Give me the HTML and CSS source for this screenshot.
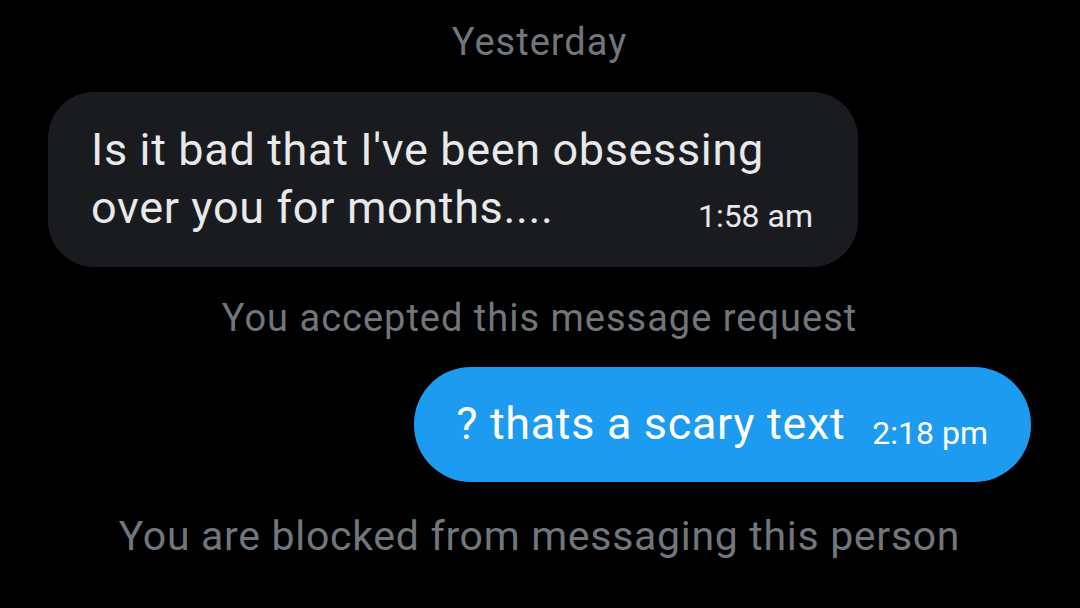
FILE: index.html
```html
<!DOCTYPE html>
<html>
<head>
<meta charset="utf-8">
<link rel="stylesheet" href="styles.css">
</head>
<body>
<main class="chat">
  <div class="sys sys-date">Yesterday</div>
  <div class="bubble bubble-in">
    <span class="msg">Is it bad that I've been obsessing over you for months....</span><span class="time time-float">1:58 am</span>
  </div>
  <div class="sys sys-accept">You accepted this message request</div>
  <div class="bubble bubble-out">
    <span class="msg">? thats a scary text</span><span class="time time-inline">2:18 pm</span>
  </div>
  <div class="sys sys-blocked">You are blocked from messaging this person</div>
</main>
</body>
</html>
```
FILE: styles.css
```css
html, body {
  margin: 0;
  padding: 0;
  background: #000;
}
body {
  width: 1080px;
  height: 608px;
  overflow: hidden;
  font-family: Roboto, "Noto Sans", sans-serif;
}
.chat {
  display: flex;
  flex-direction: column;
  padding: 19px 49px 0 48px;
}
.sys {
  align-self: center;
  color: #71767b;
  font-size: 38px;
  line-height: 46px;
  letter-spacing: 1px;
  white-space: nowrap;
}
.sys-accept { margin-top: 28px; }
.sys-blocked {
  margin-top: 31px;
  font-size: 41px;
  letter-spacing: 0.7px;
}
.bubble {
  font-size: 45px;
  line-height: 58px;
  letter-spacing: 0.65px;
}
.bubble-in {
  align-self: flex-start;
  width: 810px;
  box-sizing: border-box;
  margin-top: 27px;
  padding: 29px 45px 30px 43px;
  background: #1a1b1e;
  color: #e7e9ea;
  border-radius: 46px;
}
.bubble-out {
  align-self: flex-end;
  margin-top: 26px;
  padding: 28px 43px 29px 42px;
  background: #1d9bf0;
  color: #fff;
  border-radius: 57px;
  white-space: nowrap;
}
.time {
  font-size: 32px;
  line-height: 32px;
  letter-spacing: 0;
}
.time-float {
  float: right;
  margin-top: 21px;
}
.time-inline {
  display: inline-block;
  margin-left: 27px;
  vertical-align: -5px;
}
```
